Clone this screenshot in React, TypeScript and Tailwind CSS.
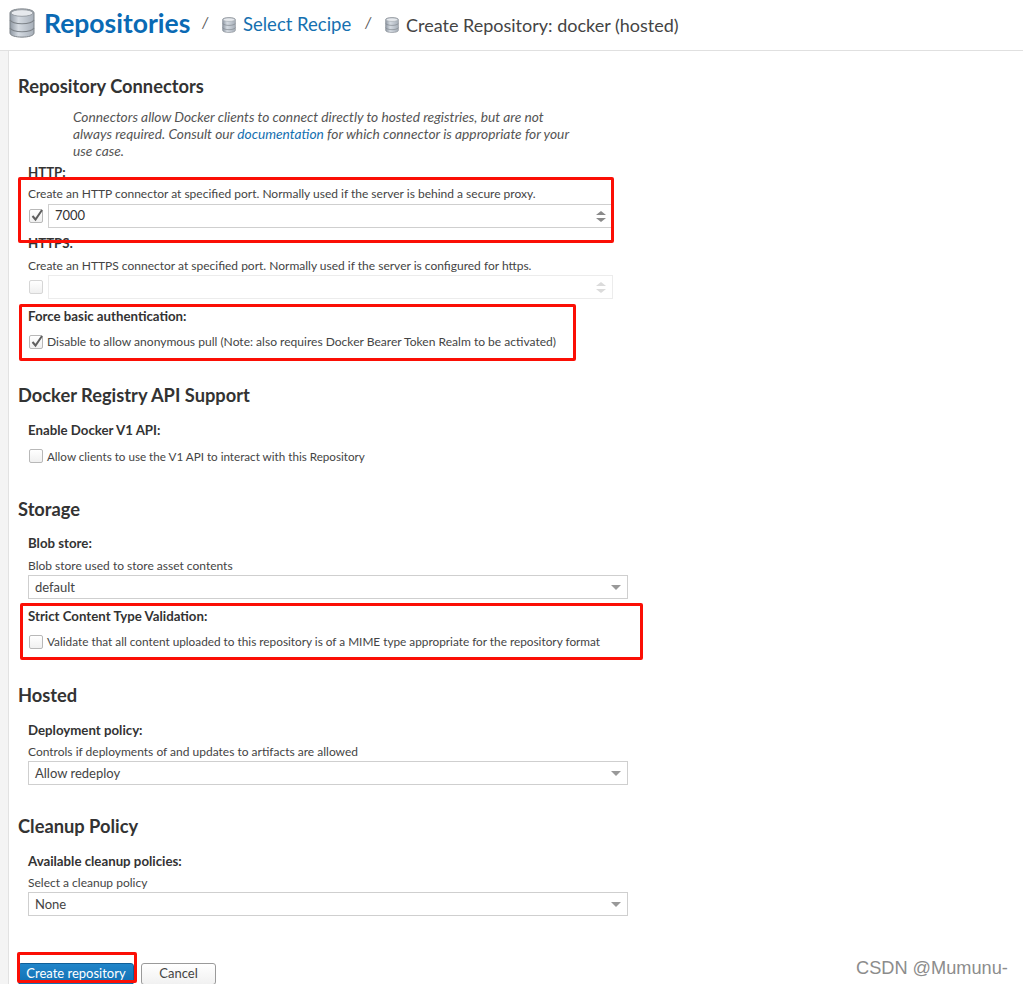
import type { ReactNode } from 'react';

function DbIcon({ className, id }: { className: string; id: string }) {
  return (
    <svg viewBox="0 0 26 30" className={className}>
      <defs>
        <linearGradient id={id} x1="0" y1="0" x2="1" y2="0">
          <stop offset="0" stopColor="#8f98a3" />
          <stop offset="0.35" stopColor="#d5dbe2" />
          <stop offset="1" stopColor="#a7afb9" />
        </linearGradient>
      </defs>
      <path d="M1 5c0-5.500 24-5.500 24 0v20c0 5.500-24 5.500-24 0z" fill={`url(#${id})`} stroke="#7d8389" strokeWidth="1" />
      <ellipse cx="13" cy="5" rx="11" ry="3.300" fill="#e6e9ed" stroke="#8a9097" strokeWidth="0.800" />
      <path d="M1 12c3 5 21 5 24 0M1 20c3 5 21 5 24 0" fill="none" stroke="#7d8389" strokeWidth="1.200" />
    </svg>
  );
}

function Check({ checked = false, faded = false }: { checked?: boolean; faded?: boolean }) {
  return (
    <span
      className={`relative w-[14px] h-[14px] shrink-0 rounded-[2px] border bg-gradient-to-b from-white to-[#f0f0f0] ${
        faded ? 'border-[#d6d6d6]' : 'border-[#b8b8b8]'
      }`}
    >
      {checked && (
        <svg viewBox="0 0 14 14" className="absolute left-0 -top-[2px] w-[14px] h-[14px] overflow-visible">
          <path d="M2.500 8l3 3.500L12 2" fill="none" stroke="#5f5f5f" strokeWidth="2" />
        </svg>
      )}
    </span>
  );
}

function Heading({ children, className }: { children: ReactNode; className: string }) {
  return <h2 className={`h-6 leading-6 text-[18.300px] font-bold text-[#333] -ml-[10px] ${className}`}>{children}</h2>;
}

function Label({ children, className }: { children: ReactNode; className: string }) {
  return <div className={`h-4 leading-4 text-[13.250px] font-bold text-[#333] ${className}`}>{children}</div>;
}

function Help({ children, className }: { children: ReactNode; className: string }) {
  return <div className={`h-4 leading-4 text-[12px] text-[#444] ${className}`}>{children}</div>;
}

function CheckRow({ children, checked, className }: { children: ReactNode; checked?: boolean; className: string }) {
  return (
    <div className={`h-4 flex items-center gap-[4px] pl-px leading-4 text-[#444] ${className}`}>
      <Check checked={checked} />
      <span>{children}</span>
    </div>
  );
}

function NumberField({ value, disabled, className }: { value?: string; disabled?: boolean; className: string }) {
  return (
    <div className={`h-6 flex items-center gap-[5px] pl-px ${className}`}>
      <Check checked={!disabled} faded={disabled} />
      <div
        className={`w-[565px] h-full flex items-center justify-between pl-[6px] pr-[6px] border text-[13px] text-[#333] ${
          disabled ? 'border-[#ececec]' : 'border-[#cfcfcf]'
        }`}
      >
        <span>{value}</span>
        <span className={`flex flex-col gap-[3px] ${disabled ? 'opacity-30' : ''}`}>
          <span className="w-0 h-0 border-x-[5px] border-x-transparent border-b-[4px] border-b-[#8a8a8a]" />
          <span className="w-0 h-0 border-x-[5px] border-x-transparent border-t-[4px] border-t-[#8a8a8a]" />
        </span>
      </div>
    </div>
  );
}

function SelectField({ value, className }: { value: string; className: string }) {
  return (
    <div
      className={`w-[600px] h-6 flex items-center justify-between pl-[6px] pr-[6px] pt-px border border-[#cfcfcf] text-[13px] text-[#444] ${className}`}
    >
      <span>{value}</span>
      <span className="w-0 h-0 border-x-[5px] border-x-transparent border-t-[5px] border-t-[#999]" />
    </div>
  );
}

export default function App() {
  return (
    <div className="relative w-[1023px] h-[984px] overflow-hidden bg-white font-['Lato',sans-serif]">
      {/* Header */}
      <header className="h-[51px] border-b border-[#e0e0e0] flex items-center pl-[9px]">
        <DbIcon id="dbLarge" className="w-[26px] h-[30px] -mt-[5px]" />
        <h1 className="ml-[9px] w-[146px] text-[26.500px] font-bold text-[#0a6ab4] -mt-[3px] whitespace-nowrap">Repositories</h1>
        <span className="ml-[12px] w-[5px] text-[15px] italic text-[#555] -mt-[5px]">/</span>
        <DbIcon id="dbSmallA" className="ml-[15px] w-[14px] h-[16px]" />
        <span className="ml-[7px] w-[108px] text-[18.500px] text-[#1570b0] whitespace-nowrap">Select Recipe</span>
        <span className="ml-[14px] w-[5px] text-[15px] italic text-[#555] -mt-[5px]">/</span>
        <DbIcon id="dbSmallB" className="ml-[15px] w-[14px] h-[16px]" />
        <span className="ml-[7px] text-[18px] text-[#444] whitespace-nowrap">Create Repository: docker (hosted)</span>
      </header>

      <div className="flex h-[933px]">
        <div className="w-[9px] shrink-0 bg-[#f4f4f4] border-r border-[#e2e2e2]" />

        {/* Form */}
        <main className="pl-[19px] pt-[23px]">
          <Heading className="">Repository Connectors</Heading>
          <p className="mt-[10px] ml-[45px] text-[13.750px] leading-[17px] italic text-[#555] whitespace-nowrap">
            Connectors allow Docker clients to connect directly to hosted registries, but are not
            <br />
            always required. Consult our <a className="text-[#1570b0]">documentation</a> for which connector is appropriate for your
            <br />
            use case.
          </p>

          <Label className="mt-[5px]">HTTP:</Label>
          <Help className="mt-[6px]">Create an HTTP connector at specified port. Normally used if the server is behind a secure proxy.</Help>
          <NumberField value="7000" className="mt-[2px]" />

          <Label className="mt-[7px]">HTTPS:</Label>
          <Help className="mt-[7px]">Create an HTTPS connector at specified port. Normally used if the server is configured for https.</Help>
          <NumberField disabled className="mt-px" />

          <Label className="mt-[9px]">Force basic authentication:</Label>
          <CheckRow checked className="mt-[10px] text-[12.050px]">Disable to allow anonymous pull (Note: also requires Docker Bearer Token Realm to be activated)</CheckRow>

          <Heading className="mt-[33px]">Docker Registry API Support</Heading>
          <Label className="mt-[15px]">Enable Docker V1 API:</Label>
          <CheckRow className="mt-[10px] text-[11.670px]">Allow clients to use the V1 API to interact with this Repository</CheckRow>

          <Heading className="mt-[33px]">Storage</Heading>
          <Label className="mt-[14px]">Blob store:</Label>
          <Help className="mt-[7px]">Blob store used to store asset contents</Help>
          <SelectField value="default" className="mt-px" />
          <Label className="mt-[9px]">Strict Content Type Validation:</Label>
          <CheckRow className="mt-[10px] text-[11.800px]">Validate that all content uploaded to this repository is of a MIME type appropriate for the repository format</CheckRow>

          <Heading className="mt-[33px]">Hosted</Heading>
          <Label className="mt-[15px]">Deployment policy:</Label>
          <Help className="mt-[6px]">Controls if deployments of and updates to artifacts are allowed</Help>
          <SelectField value="Allow redeploy" className="mt-px" />

          <Heading className="mt-[29px]">Cleanup Policy</Heading>
          <Label className="mt-[15px]">Available cleanup policies:</Label>
          <Help className="mt-[6px]">Select a cleanup policy</Help>
          <SelectField value="None" className="mt-px" />

          <div className="mt-[47px] -ml-[10px] flex gap-[7px]">
            <button className="w-[116px] h-[22px] rounded-[3px] border border-[#0f5f99] bg-gradient-to-b from-[#2185c9] to-[#1170b3] text-[13px] text-white">
              Create repository
            </button>
            <button className="w-[75px] h-[22px] rounded-[3px] border border-[#9a9a9a] bg-gradient-to-b from-white to-[#f1f1f1] text-[13px] text-[#444]">
              Cancel
            </button>
          </div>
        </main>
      </div>

      {/* Annotation boxes */}
      <div className="absolute left-[18px] top-[177px] w-[596px] h-[66px] border-[3px] border-[#fb0f05] rounded-[2px]" />
      <div className="absolute left-[19px] top-[304px] w-[557px] h-[57px] border-[3px] border-[#fb0f05] rounded-[2px]" />
      <div className="absolute left-[20px] top-[603px] w-[623px] h-[57px] border-[3px] border-[#fb0f05] rounded-[2px]" />
      <div className="absolute left-[17px] top-[952px] w-[120px] h-[31px] border-[3px] border-[#fb0f05] rounded-[2px]" />

      {/* Watermark */}
      <div className="absolute left-[856px] top-[957px] text-[18.200px] leading-[22px] text-[#8c8c8c] font-['Liberation_Sans',sans-serif]">
        CSDN @Mumunu-
      </div>
    </div>
  );
}
